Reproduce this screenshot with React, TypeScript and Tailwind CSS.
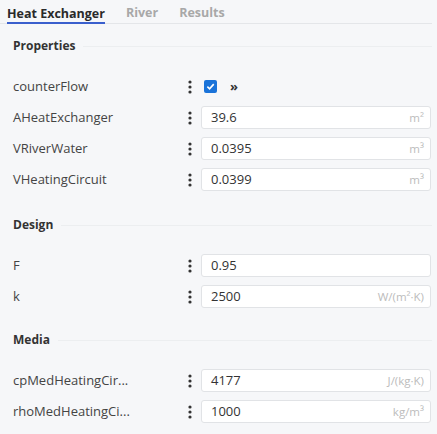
import React from 'react';

type Row = { label: string; value?: string; unit?: string; checkbox?: boolean };

const sections: { title: string; pt: string; rows: Row[] }[] = [
  {
    title: 'Properties',
    pt: 'pt-[12px]',
    rows: [
      { label: 'counterFlow', checkbox: true },
      { label: 'AHeatExchanger', value: '39.6', unit: 'm²' },
      { label: 'VRiverWater', value: '0.0395', unit: 'm³' },
      { label: 'VHeatingCircuit', value: '0.0399', unit: 'm³' },
    ],
  },
  {
    title: 'Design',
    pt: 'pt-[20px]',
    rows: [
      { label: 'F', value: '0.95' },
      { label: 'k', value: '2500', unit: 'W/(m²·K)' },
    ],
  },
  {
    title: 'Media',
    pt: 'pt-[18px]',
    rows: [
      { label: 'cpMedHeatingCir...', value: '4177', unit: 'J/(kg·K)' },
      { label: 'rhoMedHeatingCi...', value: '1000', unit: 'kg/m³' },
    ],
  },
];

const Dots = () => (
  <svg width="4" height="14" viewBox="0 0 4 14" className="shrink-0">
    <circle cx="2" cy="2" r="1.6" fill="#333" />
    <circle cx="2" cy="7" r="1.6" fill="#333" />
    <circle cx="2" cy="12" r="1.6" fill="#333" />
  </svg>
);

const FieldRow: React.FC<{ row: Row }> = ({ row }) => (
  <div className="flex items-center h-[31px]">
    <div className="w-[188px] pl-[13px] text-[13px] text-[#444] truncate">{row.label}</div>
    <div className="w-[12px] flex justify-start"><Dots /></div>
    {row.checkbox ? (
      <div className="flex items-center gap-[13px] ml-[4px]">
        <div className="w-[13px] h-[13px] rounded-[2px] bg-[#1a73d9] flex items-center justify-center">
          <svg width="9" height="9" viewBox="0 0 10 10">
            <path d="M1.5 5.2 L4 7.6 L8.6 2.4" stroke="white" strokeWidth="1.8" fill="none" />
          </svg>
        </div>
        <span className="text-[13px] font-bold text-[#333] leading-none">»</span>
      </div>
    ) : (
      <div className="ml-[1px] w-[230px] h-[23px] bg-white border border-[#e1e3e6] rounded-[3px] flex items-center justify-between pl-[9px] pr-[6px]">
        <span className="text-[13px] text-[#333]">{row.value}</span>
        <span className="text-[11.5px] text-[#bcbcbc]">{row.unit}</span>
      </div>
    )}
  </div>
);

export default function App() {
  return (
    <div
      className="w-[437px] h-[434px] overflow-hidden bg-[#f6f7f9]"
      style={{ fontFamily: '"Open Sans", "Noto Sans", sans-serif' }}
    >
      <div className="mr-[5px] border-b border-[#e4e6e9] flex items-end h-[24px] pl-[7px] gap-[21px]">
        <div className="text-[12.5px] font-bold text-[#2a2a2a] border-b-[2px] border-[#3a5fcd] -mb-px leading-[17px]">
          Heat Exchanger
        </div>
        <div className="text-[12.5px] font-bold text-[#a8a8a8] pb-[2px] leading-[17px]">River</div>
        <div className="text-[12.5px] font-bold text-[#a8a8a8] pb-[2px] leading-[17px]">Results</div>
      </div>
      {sections.map((s) => (
        <div key={s.title} className={s.pt}>
          <div className="flex items-center mr-[5px] pl-[13px] h-[20px]">
            <span className="text-[12px] font-bold text-[#333]">{s.title}</span>
            <div className="flex-1 h-px bg-[#eceef0] ml-[8px]" />
          </div>
          <div className="pt-[15px]">
            {s.rows.map((r) => (
              <FieldRow key={r.label} row={r} />
            ))}
          </div>
        </div>
      ))}
    </div>
  );
}
